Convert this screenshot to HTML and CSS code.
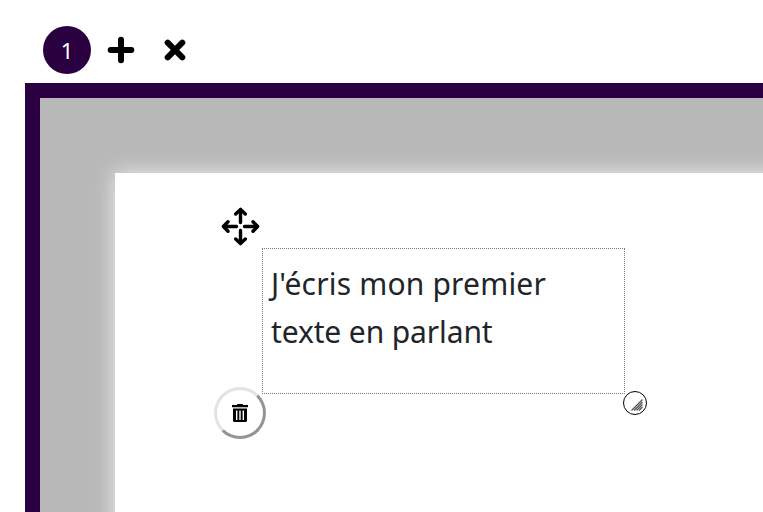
FILE: index.html
```
<!DOCTYPE html>
<html lang="fr">
<head>
    <meta charset="UTF-8">
    <meta name="viewport" content="width=device-width, initial-scale=1.0">
    <title>Mon livre</title>
    <link rel="stylesheet" href="styles.css">
</head>
<body>

    <!-- Pages -->
    <nav class="pages-bar">
        <button class="page-number">1</button>
        <button class="page-action" aria-label="Ajouter une page">
            <svg width="28" height="28" viewBox="0 0 28 28">
                <path d="M14 3.7V24.3M3.7 14H24.3"/>
            </svg>
        </button>
        <button class="page-action" aria-label="Supprimer la page">
            <svg width="28" height="28" viewBox="0 0 28 28">
                <path d="M6.7 6.7L21.3 21.3M21.3 6.7L6.7 21.3"/>
            </svg>
        </button>
    </nav>

    <!-- Editor -->
    <main class="editor">
        <div class="sheet">
            <div class="text-block">
                <svg class="move-handle" width="40" height="40" viewBox="0 0 40 40">
                    <path d="M20.5 16.5V4M20.5 24.5V37M16.5 20.5H4M24.5 20.5H37"/>
                    <path d="M15.7 8L20.5 3.4L25.3 8M15.7 33L20.5 37.6L25.3 33M8 15.7L3.4 20.5L8 25.3M33 15.7L37.6 20.5L33 25.3"/>
                </svg>
                <p class="text-content">
                    <span class="line line-wide">J'écris mon premier</span>
                    <span class="line line-tight">texte en parlant</span>
                </p>
                <button class="delete-btn" aria-label="Supprimer le texte">
                    <svg width="16" height="18" viewBox="0 0 16 18">
                        <path d="M0 1H5V0H11V1H16V3.2H0Z"/>
                        <path fill-rule="evenodd" d="M1 4.5H15V16.5Q15 18 13.5 18H2.5Q1 18 1 16.5ZM4 6.5V16H5.4V6.5ZM7.3 6.5V16H8.7V6.5ZM10.6 6.5V16H12V6.5Z"/>
                    </svg>
                </button>
                <span class="resize-handle">
                    <svg width="12" height="12" viewBox="0 0 12 12">
                        <path d="M0.5 11.5L11.5 0.5M3 11.5L11.5 3M5.5 11.5L11.5 5.5M8 11.5L11.5 8"/>
                    </svg>
                </span>
            </div>
        </div>
    </main>

</body>
</html>
```

FILE: styles.css
```
* {
    box-sizing: border-box;
}

body {
    margin: 0;
    padding: 26px 0 0 25px;
    height: 100vh;
    overflow: hidden;
    display: flex;
    flex-direction: column;
    background: white;
    color: #212529;
    font-family: "Noto Sans", "Open Sans", sans-serif;
}

button {
    padding: 0;
    border: none;
    background: none;
    font-family: inherit;
    cursor: pointer;
}

/* Pages bar */
.pages-bar {
    display: flex;
    align-items: center;
    gap: 16px;
    height: 57px;
    padding: 0 0 9px 18px;
}

.page-number {
    width: 48px;
    height: 48px;
    border-radius: 50%;
    background: #2b0040;
    color: white;
    font-size: 22px;
    line-height: 48px;
}

.page-action {
    width: 28px;
    height: 28px;
    margin-right: 10px;
}

.page-action svg {
    display: block;
    fill: none;
    stroke: black;
    stroke-width: 6;
    stroke-linecap: round;
}

/* Editor */
.editor {
    flex: 1;
    padding: 75px 0 0 75px;
    border: 15px solid #2b0040;
    border-width: 15px 0 0 15px;
    background: #b8b8b8;
    overflow: hidden;
}

.sheet {
    width: 900px;
    height: 600px;
    padding: 75px 0 0 147px;
    background: white;
    box-shadow: 0 0 20px #eee;
}

/* Text block */
.text-block {
    position: relative;
    width: 363px;
    height: 146px;
    padding: 11px 8px;
    border: 1px dotted #777;
}

.text-content {
    margin: 0;
    font-size: 30px;
    line-height: 48px;
    white-space: nowrap;
}

.line {
    display: block;
}

.line-wide {
    letter-spacing: 0.18px;
}

.line-tight {
    letter-spacing: -0.12px;
}

.move-handle {
    position: absolute;
    top: -43px;
    left: -43px;
    fill: none;
    stroke: black;
    stroke-width: 3.4;
    stroke-linecap: round;
    stroke-linejoin: round;
}

.delete-btn {
    position: absolute;
    left: -49px;
    bottom: -46px;
    display: flex;
    align-items: center;
    justify-content: center;
    width: 52px;
    height: 52px;
    border: 3px solid;
    border-color: #e3e3e3 #949494 #949494 #e3e3e3;
    border-radius: 50%;
    background: white;
}

.resize-handle {
    position: absolute;
    right: -23px;
    bottom: -22px;
    width: 24px;
    height: 24px;
    padding: 7px 0 0 7px;
    border: 1px solid black;
    border-radius: 50%;
    background: white;
}

.resize-handle svg {
    display: block;
    stroke: #555;
    stroke-width: 1.3;
}
```
